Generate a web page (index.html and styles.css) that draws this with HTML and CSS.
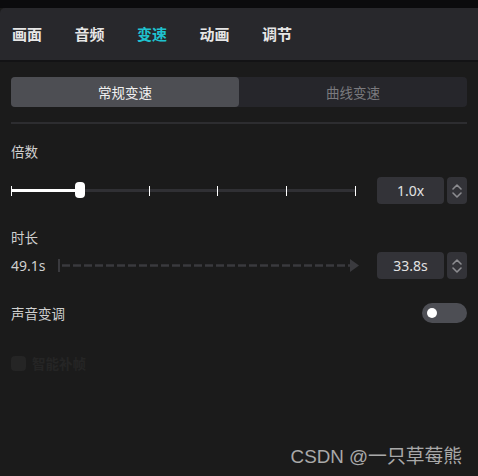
FILE: index.html
```html
<!DOCTYPE html>
<html lang="zh">
<head>
<meta charset="utf-8">
<link rel="stylesheet" href="styles.css">
</head>
<body>
<div class="topstrip"></div>
<nav class="tabs">
  <span class="tab">画面</span>
  <span class="tab">音频</span>
  <span class="tab active">变速</span>
  <span class="tab">动画</span>
  <span class="tab">调节</span>
</nav>
<main class="panel">
  <div class="segment">
    <div class="seg on">常规变速</div>
    <div class="seg">曲线变速</div>
  </div>
  <div class="divider"></div>

  <div class="label first">倍数</div>
  <div class="row">
    <div class="slider">
      <div class="track"></div>
      <div class="fill"></div>
      <span class="tick" style="left:0%"></span>
      <span class="tick" style="left:40%"></span>
      <span class="tick" style="left:60%"></span>
      <span class="tick" style="left:80%"></span>
      <span class="tick" style="left:100%"></span>
      <div class="thumb"></div>
    </div>
    <div class="num">1.0x</div>
    <div class="spin">
      <svg width="12" height="18" viewBox="0 0 12 18"><path d="M2 7 L6 3 L10 7 M2 11 L6 15 L10 11" fill="none" stroke="#8c8c90" stroke-width="1.6" stroke-linecap="round" stroke-linejoin="round"/></svg>
    </div>
  </div>

  <div class="label second">时长</div>
  <div class="row">
    <span class="dur">49.1s</span>
    <svg class="arrow" width="302" height="14" viewBox="0 0 302 14">
      <rect x="0" y="0" width="2" height="13" fill="#3a3a3e"/>
      <line x1="4" y1="6.5" x2="294" y2="6.5" stroke="#3a3a3e" stroke-width="2.5" stroke-dasharray="8 3"/>
      <path d="M292 0 L301 6.5 L292 13 Z" fill="#3a3a3e"/>
    </svg>
    <div class="num">33.8s</div>
    <div class="spin">
      <svg width="12" height="18" viewBox="0 0 12 18"><path d="M2 7 L6 3 L10 7 M2 11 L6 15 L10 11" fill="none" stroke="#8c8c90" stroke-width="1.6" stroke-linecap="round" stroke-linejoin="round"/></svg>
    </div>
  </div>

  <div class="row pitch">
    <span class="plabel">声音变调</span>
    <div class="toggle"><span class="knob"></span></div>
  </div>

  <div class="check">
    <span class="box"></span>
    <span class="ctext">智能补帧</span>
  </div>
</main>
<div class="watermark">CSDN @一只草莓熊</div>
</body>
</html>
```

FILE: styles.css
```css
html, body {
  margin: 0;
  padding: 0;
}
body {
  width: 478px;
  height: 476px;
  background: #1b1b1b;
  font-family: "Noto Sans", "Noto Sans CJK SC", sans-serif;
  color: #d2d2d2;
  position: relative;
  overflow: hidden;
}
.topstrip {
  height: 8px;
  background: #0b0b0d;
}
.tabs {
  height: 52px;
  background: #28282c;
  border-top-left-radius: 5px;
  border-bottom: 2px solid #131315;
  display: flex;
  align-items: center;
  padding-left: 12px;
  gap: 32.5px;
}
.tab {
  font-size: 15px;
  font-weight: bold;
  color: #e6e6e6;
  line-height: 20px;
}
.tab.active {
  color: #1fc2cf;
}
.panel {
  padding: 0 11px;
}
.segment {
  margin-top: 15px;
  height: 30px;
  background: #26262b;
  border-radius: 4px;
  display: flex;
}
.seg {
  flex: 1;
  display: flex;
  align-items: center;
  justify-content: center;
  font-size: 13.5px;
  color: #7a7a7e;
  border-radius: 4px;
}
.seg.on {
  background: #4d4e53;
  color: #f0f0f0;
}
.divider {
  margin-top: 15px;
  height: 2px;
  background: #2d2d30;
}
.label {
  font-size: 13.5px;
  line-height: 20px;
  color: #d0d0d0;
}
.label.first {
  margin-top: 18px;
}
.label.second {
  margin-top: 24px;
}
.row {
  display: flex;
  align-items: center;
  height: 27px;
}
.label.first + .row {
  margin-top: 15px;
}
.label.second + .row {
  margin-top: 4px;
}
.slider {
  position: relative;
  width: 344px;
  height: 27px;
}
.track {
  position: absolute;
  left: 0;
  right: 0;
  top: 12px;
  height: 3px;
  background: #303034;
}
.fill {
  position: absolute;
  left: 0;
  width: 69px;
  top: 12px;
  height: 3px;
  background: #ffffff;
}
.tick {
  position: absolute;
  top: 9px;
  width: 1px;
  height: 10px;
  background: #ffffff;
}
.thumb {
  position: absolute;
  left: 64px;
  top: 5px;
  width: 10px;
  height: 16px;
  border-radius: 4px;
  background: #ffffff;
}
.num {
  margin-left: auto;
  width: 67px;
  height: 27px;
  background: #333338;
  border-radius: 4px;
  display: flex;
  align-items: center;
  justify-content: center;
  font-size: 14px;
  color: #e2e2e2;
}
.spin {
  margin-left: 3px;
  width: 20px;
  height: 27px;
  background: #333338;
  border-radius: 4px;
  display: flex;
  align-items: center;
  justify-content: center;
}
.dur {
  font-size: 14px;
  color: #cfcfcf;
  width: 47px;
}
.arrow {
  display: block;
}
.pitch {
  margin-top: 24px;
  height: 20px;
}
.plabel {
  font-size: 13.5px;
  color: #d0d0d0;
}
.toggle {
  margin-left: auto;
  width: 45px;
  height: 20px;
  border-radius: 10px;
  background: #4d4e54;
  display: flex;
  align-items: center;
  padding-left: 5px;
  box-sizing: border-box;
}
.knob {
  width: 10px;
  height: 10px;
  border-radius: 50%;
  background: #ffffff;
}
.check {
  margin-top: 30px;
  display: flex;
  align-items: center;
  gap: 6px;
}
.box {
  width: 15px;
  height: 15px;
  border-radius: 4px;
  background: #252525;
}
.ctext {
  font-size: 13.5px;
  font-weight: bold;
  color: #252525;
}
.watermark {
  position: absolute;
  right: 16px;
  bottom: 8px;
  font-family: "Liberation Sans", "Noto Sans CJK SC", sans-serif;
  font-size: 18.8px;
  color: #a9a9a9;
}
```
